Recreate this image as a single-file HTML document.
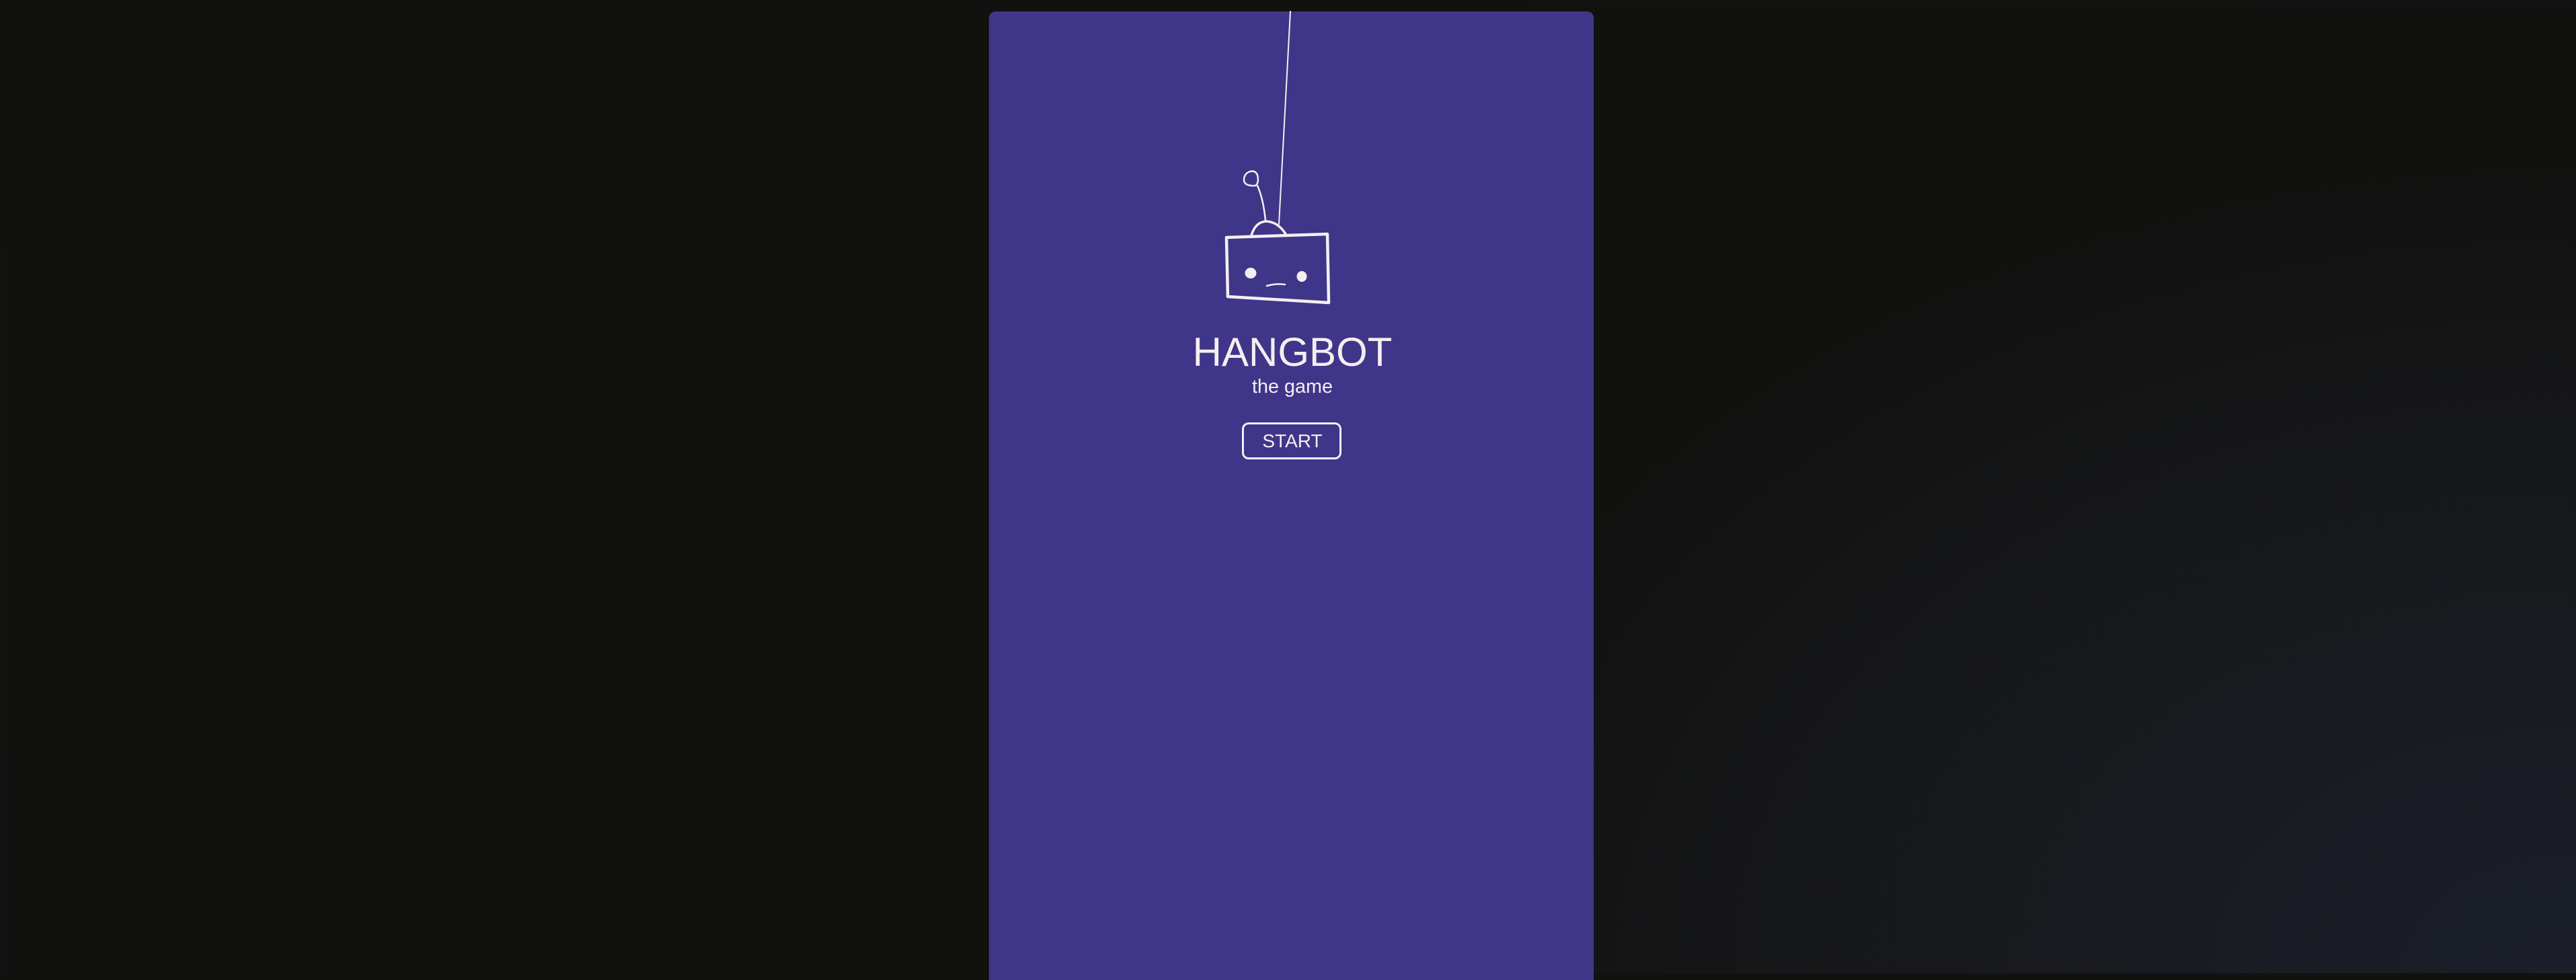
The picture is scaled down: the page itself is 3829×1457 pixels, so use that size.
<!DOCTYPE html>
<html><head><meta charset="utf-8"><style>
html,body{margin:0;padding:0}
body{width:3829px;height:1447px;overflow:hidden;position:relative;
background:radial-gradient(ellipse 2200px 1500px at 3829px 1447px,#1b1f2a 0%,#161719 55%,#111110 80%),#111110;
font-family:"Liberation Sans",sans-serif;color:#f5eef0}
.card{position:absolute;left:1470px;top:17px;width:899px;height:1440px;background:#3f3689;border-radius:10px 10px 0 0}
.t{position:absolute;left:1421px;width:1000px;text-align:center;white-space:nowrap;line-height:1}
.btn{position:absolute;left:1846px;top:628px;width:142px;height:49px;border:3.5px solid #f5eef0;border-radius:10px}
</style></head><body>
<div class="card"></div>
<svg style="position:absolute;left:0;top:0" width="3829" height="1447">
<g fill="none" stroke="#f5eef0" stroke-linecap="round" stroke-linejoin="round">
<line x1="1918" y1="17" x2="1901" y2="333" stroke-width="2"/>
<path d="M1823 353 L1973 348 L1975 450 L1825 441 Z" stroke-width="4.5"/>
<path d="M1860 350 Q1866 330 1882 329 Q1900 330 1911 348" stroke-width="3.5"/>
<path d="M1881 328 Q1878 296 1869 276" stroke-width="2.5"/>
<path d="M1866 276 Q1872 272 1869 260 Q1866 253 1858 255 Q1849 258 1849 268 Q1850 277 1866 276 Z" stroke-width="2.5"/>
<path d="M1883 425 Q1897 421 1910 423" stroke-width="2.5"/>
</g>
<ellipse cx="1859" cy="406" rx="8.5" ry="8" fill="#f5eef0"/>
<ellipse cx="1935" cy="411" rx="7.5" ry="8" fill="#f5eef0"/>
</svg>
<div class="t" style="top:494px;font-size:60px">HANGBOT</div>
<div class="t" style="top:561px;font-size:28.8px">the game</div>
<div class="btn"></div>
<div class="t" style="top:642px;font-size:28px">START</div>
</body></html>
